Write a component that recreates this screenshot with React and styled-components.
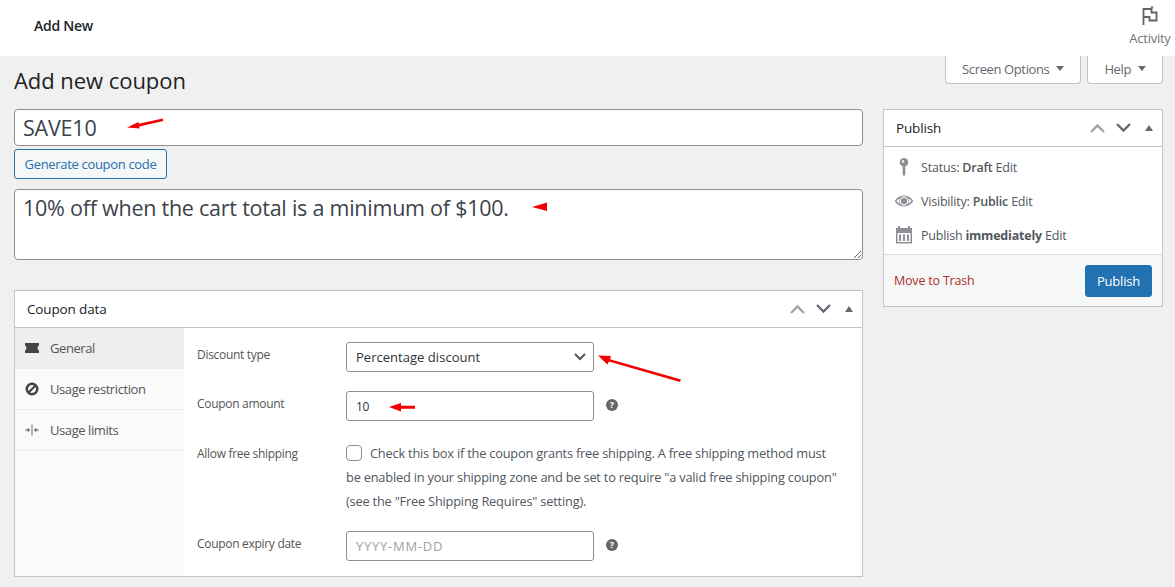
import React from "react";
import styled, { createGlobalStyle } from "styled-components";

const GlobalStyle = createGlobalStyle`
  html, body {
    margin: 0;
    padding: 0;
    background: #f0f0f0;
  }
  body {
    font-family: "Open Sans", "Noto Sans", "Liberation Sans", sans-serif;
    font-size: 13px;
    color: #3c434a;
    letter-spacing: -0.25px;
  }
  * {
    box-sizing: border-box;
  }
`;

const Page = styled.div`
  position: relative;
  width: 1175px;
  height: 587px;
  overflow: hidden;
`;

const Header = styled.header`
  height: 56px;
  background: #fff;
  display: flex;
  justify-content: space-between;
  padding-left: 34px;
`;

const HeaderTitle = styled.div`
  font-size: 14px;
  font-weight: 600;
  color: #1d2327;
  line-height: 52px;
`;

const ActivityButton = styled.div`
  width: 52px;
  margin-right: -1px;
  padding-top: 6px;
  display: flex;
  flex-direction: column;
  align-items: center;
  gap: 3px;
  font-size: 13px;
  color: #757575;
  line-height: 18px;
`;

const Content = styled.div`
  padding: 0 12px 0 14px;
`;

const TitleRow = styled.div`
  height: 53px;
  display: flex;
  justify-content: space-between;
  align-items: flex-start;
`;

const PageTitle = styled.h1`
  margin: 9px 0 0;
  font-size: 22px;
  font-weight: 400;
  line-height: 30px;
  color: #1d2327;
  letter-spacing: -0.05px;
`;

const MetaTabs = styled.div`
  display: flex;
  gap: 6px;
`;

const MetaTab = styled.div`
  height: 28px;
  padding: 0 16px 2px;
  display: flex;
  align-items: center;
  gap: 7px;
  background: #fff;
  border: 1px solid #c3c4c7;
  border-top: none;
  border-radius: 0 0 4px 4px;
  color: #646970;
  letter-spacing: -0.38px;
`;

const Caret = styled.span`
  width: 0;
  height: 0;
  border-left: 4px solid transparent;
  border-right: 4px solid transparent;
  border-top: 5px solid #646970;
`;

const Columns = styled.div`
  display: flex;
  justify-content: space-between;
  align-items: flex-start;
`;

const MainColumn = styled.div`
  width: 849px;
`;

const SideColumn = styled.aside`
  width: 280px;
`;

const TitleInput = styled.input`
  display: block;
  width: 100%;
  height: 37px;
  padding: 0 8px;
  border: 1px solid #8c8f94;
  border-radius: 4px;
  background: #fff;
  color: #3c434a;
  font-family: inherit;
  font-size: 21.5px;
  letter-spacing: -0.2px;
  outline: none;
`;

const GenerateButton = styled.button`
  display: block;
  height: 30px;
  width: 153px;
  margin: 3px 0 10px;
  padding: 0;
  border: 1px solid #2271b1;
  border-radius: 3px;
  background: #f6f7f7;
  color: #2271b1;
  font-family: inherit;
  font-size: 13px;
  letter-spacing: -0.32px;
`;

const Description = styled.textarea`
  display: block;
  width: 100%;
  height: 71px;
  padding: 4px 8px;
  border: 1px solid #8c8f94;
  border-radius: 4px;
  background: #fff;
  color: #3c434a;
  font-family: inherit;
  font-size: 21.5px;
  line-height: 28px;
  letter-spacing: -0.24px;
  outline: none;
`;

const Box = styled.section`
  background: #fff;
  border: 1px solid #c3c4c7;
  margin-top: ${(p) => p.$top || 0}px;
`;

const BoxHeader = styled.div`
  height: 37px;
  padding: 0 6px 0 12px;
  display: flex;
  align-items: center;
  justify-content: space-between;
  border-bottom: 1px solid #c3c4c7;
  color: #1d2327;
  font-size: 13.5px;
  letter-spacing: -0.15px;
`;

const BoxControls = styled.div`
  display: flex;
  align-items: center;
  gap: 11px;
`;

const Sort = styled.svg`
  display: block;
  width: 15px;
  height: 10px;
  fill: none;
  stroke: ${(p) => p.$stroke};
  stroke-width: 2.3;
`;

const ToggleArrow = styled.span`
  width: 0;
  height: 0;
  margin: 0 3px;
  border-left: 4px solid transparent;
  border-right: 4px solid transparent;
  border-bottom: 6px solid #646970;
`;

const CouponBody = styled.div`
  display: flex;
  height: 248px;
`;

const TabList = styled.ul`
  width: 169px;
  margin: 0;
  padding: 0;
  list-style: none;
  background: #fafafa;
`;

const TabItem = styled.li`
  height: 41px;
  padding-left: 9px;
  padding-bottom: 1px;
  display: flex;
  align-items: center;
  gap: 10px;
  border-bottom: ${(p) => (p.$active ? "none" : "1px solid #eee")};
  background: ${(p) => (p.$active ? "#eee" : "transparent")};
  color: #555;
  line-height: 40px;
  letter-spacing: -0.42px;
`;

const TabIcon = styled.svg`
  width: 16px;
  height: 16px;
  flex: none;
  fill: #444;
`;

const Panel = styled.div`
  flex: 1;
  padding: 14px 0 0 13px;
`;

const Field = styled.div`
  display: flex;
  align-items: flex-start;
  min-height: 30px;
  margin-bottom: ${(p) => p.$gap}px;
`;

const FieldLabel = styled.label`
  width: 149px;
  flex: none;
  margin-top: ${(p) => p.$top}px;
  font-size: 12px;
  line-height: 18px;
  color: #555;
  letter-spacing: -0.3px;
`;

const SelectWrap = styled.div`
  position: relative;
  width: 248px;
  svg {
    position: absolute;
    right: 8px;
    top: 11px;
    pointer-events: none;
  }
`;

const Select = styled.select`
  display: block;
  width: 100%;
  height: 30px;
  padding: 0 24px 0 9px;
  appearance: none;
  border: 1px solid #8c8f94;
  border-radius: 3px;
  background: #fff;
  color: #2c3338;
  font-family: inherit;
  font-size: 13px;
  letter-spacing: 0.03px;
`;

const TextInput = styled.input`
  display: block;
  width: 248px;
  height: 30px;
  padding: 0 9px;
  border: 1px solid #8c8f94;
  border-radius: 3px;
  background: #fff;
  color: #2c3338;
  font-family: inherit;
  font-size: 12px;
  letter-spacing: -0.3px;
  outline: none;
  &::placeholder {
    color: #a0a0a0;
    opacity: 1;
    font-size: 13px;
    letter-spacing: 0.75px;
  }
`;

const HelpTip = styled.span`
  width: 12px;
  height: 12px;
  margin: 8px 0 0 12px;
  flex: none;
  border-radius: 50%;
  background: #666;
  color: #fff;
  font-size: 9px;
  font-weight: 700;
  line-height: 12px;
  text-align: center;
  letter-spacing: 0;
`;

const ShippingText = styled.div`
  width: 496px;
  margin-top: -6px;
  font-size: 12.8px;
  line-height: 24px;
  color: #50575e;
  letter-spacing: -0.2px;
`;

const Checkbox = styled.input`
  appearance: none;
  display: inline-block;
  width: 16px;
  height: 16px;
  margin: 0 8px 0 0;
  vertical-align: -3px;
  border: 1px solid #8c8f94;
  border-radius: 4px;
  background: #fff;
`;

const PublishRows = styled.div`
  padding: 3px 10px 0;
  height: 107px;
`;

const PublishRow = styled.div`
  height: 34px;
  display: flex;
  align-items: center;
  gap: 6px;
  color: #50575e;
  font-size: 12.5px;
  letter-spacing: -0.2px;
  b {
    font-weight: ${(p) => p.$weight || 600};
  }
`;

const RowIcon = styled.svg`
  width: 20px;
  height: 20px;
  flex: none;
  fill: #8c8f94;
  margin-right: 1px;
`;

const PublishActions = styled.div`
  height: 52px;
  padding: 0 10px;
  display: flex;
  align-items: center;
  justify-content: space-between;
  background: #f6f7f7;
  border-top: 1px solid #dcdcde;
`;

const TrashLink = styled.a`
  color: #b32d2e;
  font-size: 12.5px;
  letter-spacing: -0.2px;
`;

const PublishButton = styled.button`
  width: 67px;
  height: 32px;
  padding: 0;
  border: 1px solid #2271b1;
  border-radius: 3px;
  background: #2271b1;
  color: #fff;
  font-family: inherit;
  font-size: 13px;
  letter-spacing: -0.2px;
`;

const Annotations = styled.svg`
  position: absolute;
  top: 0;
  left: 0;
  pointer-events: none;
`;

const BoxSorts = () => (
  <BoxControls>
    <Sort $stroke="#a0a3a6" viewBox="0 0 15 10"><path d="M1 9l6.500-6.500L14 9" /></Sort>
    <Sort $stroke="#646970" viewBox="0 0 15 10"><path d="M1 1l6.500 6.500L14 1" /></Sort>
    <ToggleArrow />
  </BoxControls>
);

export default function App() {
  return (
    <Page>
      <GlobalStyle />
      <Header>
        <HeaderTitle>Add New</HeaderTitle>
        <ActivityButton>
          <svg width="18" height="20" viewBox="0 0 18 20" fill="none">
            <path d="M2.500 19V3h8v3.500h5v8h-7V11H2.500" stroke="#5f6368" strokeWidth="1.800" />
            <circle cx="11" cy="1.500" r="1.200" fill="#c9556f" />
          </svg>
          Activity
        </ActivityButton>
      </Header>
      <Content>
        <TitleRow>
          <PageTitle>Add new coupon</PageTitle>
          <MetaTabs>
            <MetaTab>Screen Options <Caret /></MetaTab>
            <MetaTab>Help <Caret /></MetaTab>
          </MetaTabs>
        </TitleRow>
        <Columns>
          <MainColumn>
            <TitleInput defaultValue="SAVE10" />
            <GenerateButton>Generate coupon code</GenerateButton>
            <Description defaultValue="10% off when the cart total is a minimum of $100." />
            <Box $top={30}>
              <BoxHeader>
                Coupon data
                <BoxSorts />
              </BoxHeader>
              <CouponBody>
                <TabList>
                  <TabItem $active>
                    <TabIcon viewBox="0 0 16 16"><path d="M1 3h14v2.600c-1 .5-1.400 1.400-1.400 2.400s.4 1.900 1.400 2.400V13H1v-2.600C2 9.900 2.400 9 2.400 8S2 6.100 1 5.600z" /></TabIcon>
                    General
                  </TabItem>
                  <TabItem>
                    <TabIcon viewBox="0 0 16 16"><path fillRule="evenodd" d="M8 1.500a6.500 6.500 0 100 13 6.500 6.500 0 000-13zM8 4c.7 0 1.400.2 2 .5L4.500 10A4 4 0 018 4zm0 8c-.7 0-1.400-.2-2-.5L11.500 6A4 4 0 018 12z" /></TabIcon>
                    Usage restriction
                  </TabItem>
                  <TabItem>
                    <TabIcon viewBox="0 0 16 16"><path d="M7.600 2.500h.8v11h-.8zM1.500 7.600h3.200L3.500 6.400l.5-.4L6 8l-2 2-.5-.4 1.200-1.200H1.500zM14.500 7.600h-3.200l1.200-1.200-.5-.4-2 2 2 2 .5-.4-1.200-1.200h3.200z" /></TabIcon>
                    Usage limits
                  </TabItem>
                </TabList>
                <Panel>
                  <Field $gap={19}>
                    <FieldLabel $top={4}>Discount type</FieldLabel>
                    <SelectWrap>
                      <Select defaultValue="percent">
                        <option value="percent">Percentage discount</option>
                      </Select>
                      <svg width="12" height="8" viewBox="0 0 12 8" fill="none" stroke="#50575e" strokeWidth="2">
                        <path d="M1 1l5 5 5-5" />
                      </svg>
                    </SelectWrap>
                  </Field>
                  <Field $gap={26}>
                    <FieldLabel $top={4}>Coupon amount</FieldLabel>
                    <TextInput defaultValue="10" />
                    <HelpTip>?</HelpTip>
                  </Field>
                  <Field $gap={18}>
                    <FieldLabel $top={-2}>Allow free shipping</FieldLabel>
                    <ShippingText>
                      <Checkbox type="checkbox" />
                      Check this box if the coupon grants free shipping. A free shipping method must
                      be enabled in your shipping zone and be set to require "a valid free shipping coupon"
                      (see the "Free Shipping Requires" setting).
                    </ShippingText>
                  </Field>
                  <Field $gap={0}>
                    <FieldLabel $top={4}>Coupon expiry date</FieldLabel>
                    <TextInput placeholder="YYYY-MM-DD" />
                    <HelpTip>?</HelpTip>
                  </Field>
                </Panel>
              </CouponBody>
            </Box>
          </MainColumn>
          <SideColumn>
            <Box>
              <BoxHeader>
                Publish
                <BoxSorts />
              </BoxHeader>
              <PublishRows>
                <PublishRow>
                  <RowIcon viewBox="0 0 20 20"><path fillRule="evenodd" d="M10 1a4.200 4.200 0 011.300 8.200V17L10 19.500 8.700 17V9.200A4.200 4.200 0 0110 1zM9 3.200a1.200 1.200 0 100 2.400 1.200 1.200 0 000-2.400z" /></RowIcon>
                  <span>Status: <b>Draft</b> Edit</span>
                </PublishRow>
                <PublishRow>
                  <RowIcon viewBox="0 0 20 20">
                    <path fillRule="evenodd" d="M10 4.500c4 0 7.300 2.300 9.300 5.500-2 3.200-5.300 5.500-9.300 5.500S2.700 13.200.7 10c2-3.200 5.300-5.500 9.300-5.500zM10 5.600a4.400 4.400 0 100 8.800 4.400 4.400 0 000-8.800zM2.500 10c.9 1.100 2 2 3.200 2.700a5.500 5.500 0 010-5.400C4.500 8 3.400 8.900 2.500 10zm15 0c-.9-1.100-2-2-3.200-2.700a5.500 5.500 0 010 5.400c1.200-.7 2.300-1.600 3.200-2.700z" />
                    <circle cx="10" cy="10" r="3.200" />
                  </RowIcon>
                  <span>Visibility: <b>Public</b> Edit</span>
                </PublishRow>
                <PublishRow $weight={700}>
                  <RowIcon viewBox="0 0 20 20"><path fillRule="evenodd" d="M4 1h2v2h8V1h2v2h2v15.500H2V3h2zM3.500 8v9h13V8zM5 9.500h2V16H5zm4 0h2V16H9zm4 0h2V16h-2z" /></RowIcon>
                  <span>Publish <b>immediately</b> Edit</span>
                </PublishRow>
              </PublishRows>
              <PublishActions>
                <TrashLink>Move to Trash</TrashLink>
                <PublishButton>Publish</PublishButton>
              </PublishActions>
            </Box>
          </SideColumn>
        </Columns>
      </Content>
      <Annotations width="1175" height="587" viewBox="0 0 1175 587" fill="#f00000">
        <path d="M127 127.500l11.500-5.500.3 1.700 24-5.200.5 2.600-24 5.400.2 2z" />
        <path d="M532 207l15-4.500v8.500z" />
        <path d="M598 355.500l13 .5-1 3.200 71 20.300-1 2.500-71-20.500-1.600 3z" />
        <path d="M389 407l12-4v2.800h14v3h-14v2.600z" />
      </Annotations>
    </Page>
  );
}
